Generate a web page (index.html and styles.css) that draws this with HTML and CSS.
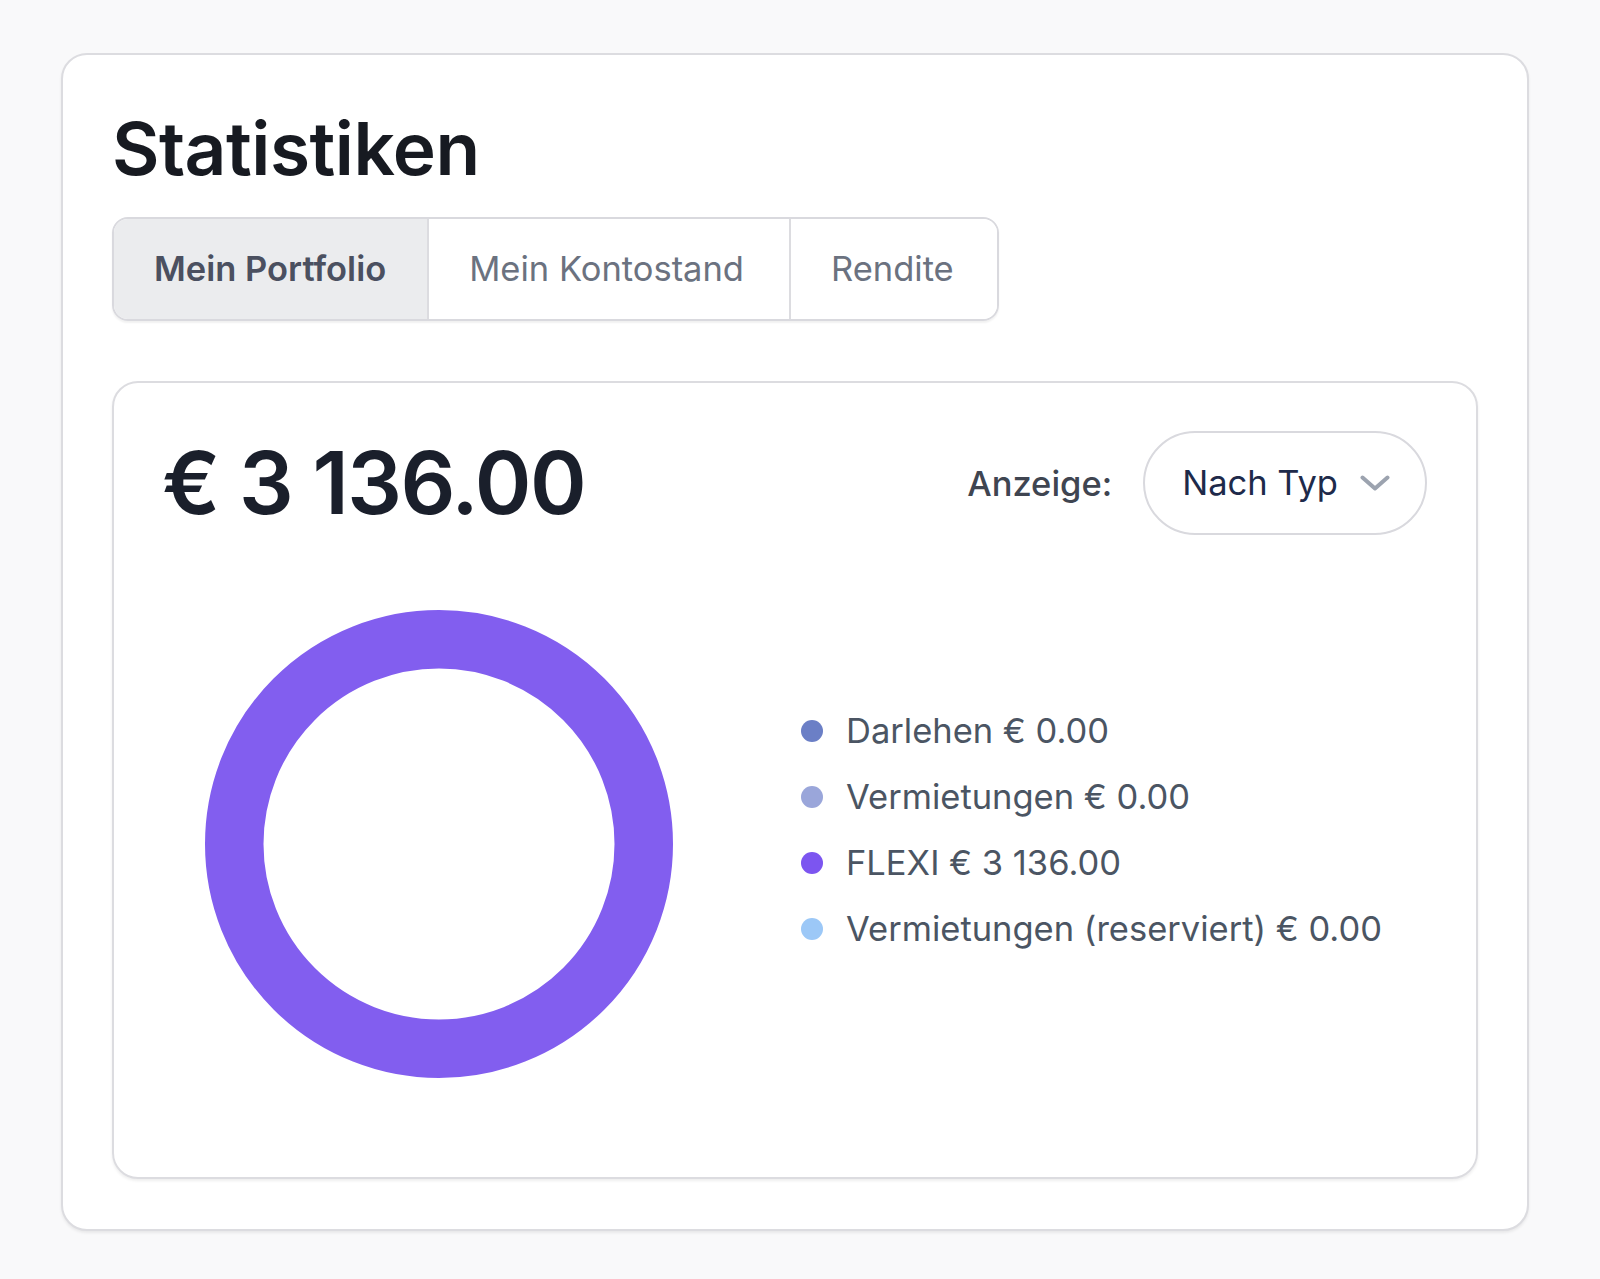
FILE: index.html
```html
<!DOCTYPE html>
<html lang="de">
<head>
<meta charset="utf-8">
<title>Statistiken</title>
<link rel="stylesheet" href="styles.css">
</head>
<body>
<div class="page">
  <section class="card">
    <h1 class="title">Statistiken</h1>
    <div class="tabs">
      <button class="tab active">Mein Portfolio</button>
      <button class="tab">Mein Kontostand</button>
      <button class="tab">Rendite</button>
    </div>
    <div class="panel">
      <div class="panel-head">
        <div class="total">€ 3 136.00</div>
        <div class="view">
          <span class="view-label">Anzeige:</span>
          <div class="select">
            <span class="select-text">Nach Typ</span>
            <svg class="chev" width="30" height="16" viewBox="0 0 30 16"><polyline points="2.5,2.5 15,13.5 27.5,2.5" fill="none" stroke="#9ca3af" stroke-width="4" stroke-linecap="round" stroke-linejoin="round"/></svg>
          </div>
        </div>
      </div>
      <div class="panel-body">
        <div class="chart">
          <svg width="470" height="470" viewBox="0 0 470 470"><circle cx="235" cy="235" r="204.75" fill="none" stroke="#825eef" stroke-width="58.5"/></svg>
        </div>
        <ul class="legend">
          <li class="legend-item"><span class="dot dot-loan"></span>Darlehen € 0.00</li>
          <li class="legend-item"><span class="dot dot-rent"></span>Vermietungen € 0.00</li>
          <li class="legend-item"><span class="dot dot-flexi"></span>FLEXI € 3 136.00</li>
          <li class="legend-item"><span class="dot dot-reserved"></span>Vermietungen (reserviert) € 0.00</li>
        </ul>
      </div>
    </div>
  </section>
</div>
</body>
</html>
```
FILE: styles.css
```css
* { box-sizing: border-box; }
html, body { margin: 0; padding: 0; }
body {
  background: #f9f9fa;
  font-family: Inter, "Noto Sans", sans-serif;
  color: #1a1d24;
  width: 1600px;
  height: 1279px;
  overflow: hidden;
}
.page {
  padding: 53px 0 0 61px;
}
.card {
  width: 1468px;
  background: #fff;
  border: 2px solid #dcdce0;
  border-radius: 26px;
  box-shadow: 0 2px 3px rgba(0, 0, 0, 0.07);
  padding: 54px 49px 50px 49px;
}
.title {
  margin: 0;
  font-size: 73px;
  line-height: 80px;
  font-weight: 600;
  letter-spacing: -0.5px;
  color: #171a21;
}
.tabs {
  display: inline-flex;
  margin-top: 28px;
  border: 2px solid #d9d9de;
  border-radius: 16px;
  overflow: hidden;
  box-shadow: 0 2px 2px rgba(0, 0, 0, 0.06);
}
.tab {
  font-family: Inter, "Noto Sans", sans-serif;
  font-size: 34.5px;
  line-height: 48px;
  padding: 26px 45px 26px 40px;
  border: 0;
  border-left: 2px solid #dcdce0;
  background: #fff;
  color: #6b7280;
  font-weight: 400;
  margin: 0;
}
.tab:first-child { border-left: 0; padding-right: 41px; }
.tab:last-child { padding-right: 43px; }
.tab.active {
  background: #ebecee;
  color: #4b5060;
  font-weight: 600;
}
.panel {
  margin-top: 60px;
  border: 2px solid #dcdce0;
  border-radius: 26px;
  box-shadow: 0 2px 3px rgba(0, 0, 0, 0.07);
  padding: 48px 49px 48px 48px;
}
.panel-head {
  display: flex;
  align-items: center;
  justify-content: space-between;
}
.total {
  font-size: 86px;
  line-height: 100px;
  font-weight: 600;
  letter-spacing: -1.5px;
  color: #1a1f2b;
}
.view {
  display: flex;
  align-items: center;
  gap: 31px;
}
.view-label {
  font-size: 34.5px;
  font-weight: 500;
  color: #3f4551;
}
.select {
  display: flex;
  align-items: center;
  gap: 22px;
  border: 2px solid #d9d9de;
  border-radius: 999px;
  padding: 26px 35px 26px 37px;
}
.select-text {
  font-size: 34.5px;
  line-height: 48px;
  color: #1e2a4a;
}
.chev { display: block; }
.panel-body {
  display: flex;
  margin-top: 24px;
}
.chart {
  width: 554px;
  height: 570px;
  display: flex;
  align-items: center;
  justify-content: center;
}
.chart svg { display: block; }
.legend {
  list-style: none;
  margin: 0 0 29px 85px;
  padding: 0;
  align-self: center;
}
.legend-item {
  display: flex;
  align-items: center;
  gap: 23px;
  font-size: 34.5px;
  line-height: 66px;
  height: 66px;
  color: #4b5563;
}
.dot {
  width: 22px;
  height: 22px;
  border-radius: 50%;
  flex: none;
}
.dot-loan { background: #6b7fc6; }
.dot-rent { background: #9aa6da; }
.dot-flexi { background: #7c55f0; }
.dot-reserved { background: #9cc8f7; }
```
